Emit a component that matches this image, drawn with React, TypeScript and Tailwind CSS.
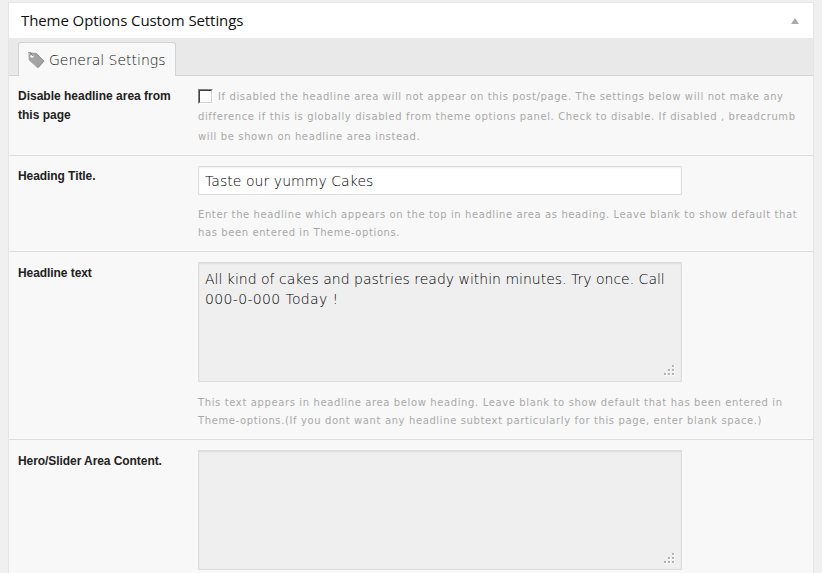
import type { ReactNode } from "react";

const SANS = "font-['DejaVu_Sans',sans-serif]";

function Grip() {
  const dots = [[9, 1], [5, 5], [9, 5], [1, 9], [5, 9], [9, 9]];
  return (
    <svg className="absolute right-[5px] bottom-[4px]" width="13" height="13" shapeRendering="crispEdges">
      {dots.map(([x, y]) => (
        <g key={`${x}-${y}`}>
          <rect x={x} y={y} width="3" height="3" fill="#fafafa" />
          <rect x={x} y={y} width="2" height="2" fill="#b2b2b2" />
        </g>
      ))}
    </svg>
  );
}

function TagIcon() {
  return (
    <svg className="shrink-0" width="17" height="17" viewBox="0 0 17 17">
      <path d="M1 2.5 2.5 1 8 1.3 15.8 9.2 9.8 15.8 1.2 8Z" fill="#a3a3a3" stroke="#a3a3a3" strokeLinejoin="round" />
      <path d="M8 1.3 15.8 9.2 10 15.6" fill="none" stroke="#8a8a8a" />
      <circle cx="4" cy="4.2" r="1.6" fill="#f7f7f7" />
      <path d="M0 .8H3L4.6 4" fill="none" stroke="#7c7c7c" />
    </svg>
  );
}

function Label({ children, className = "pt-px" }: { children: ReactNode; className?: string }) {
  return (
    <div className={`w-[180px] shrink-0 whitespace-nowrap font-['Liberation_Sans',sans-serif] text-[12px] leading-[19px] font-bold text-[#222] ${className}`}>
      {children}
    </div>
  );
}

function Help({ lines, className }: { lines: string[]; className: string }) {
  return (
    <div className={`${SANS} whitespace-nowrap text-[10px] text-[#a9a9a9] ${className}`}>
      {lines.map((line) => (
        <div key={line}>{line}</div>
      ))}
    </div>
  );
}

function TextArea({ children }: { children?: ReactNode }) {
  return (
    <div className={`${SANS} relative h-[120px] w-[484px] border border-[#dddddd] bg-[#efefef] px-[6px] pt-[6px] text-[14px] leading-5 font-extralight whitespace-nowrap text-black shadow-[inset_0_1px_2px_rgba(0,0,0,0.07)]`}>
      {children}
      <Grip />
    </div>
  );
}

export default function App() {
  return (
    <div className="h-[573px] overflow-hidden bg-[#f0f0f0] pt-[2px] pl-[8px]">
      <div className="h-[600px] w-[806px] border border-[#e5e5e5] bg-[#f8f8f8] shadow-[0_1px_1px_rgba(0,0,0,0.04)]">
        <header className="flex h-[35px] items-center justify-between bg-white pr-[14px] pl-[12px]">
          <h1 className="pb-[2px] font-['Open_Sans',sans-serif] text-[15px] leading-5 font-normal tracking-[-0.09px] text-[#111]">Theme Options Custom Settings</h1>
          <svg width="8" height="6"><path d="M4 0 8 6H0Z" fill="#aaa" /></svg>
        </header>
        <nav className="flex h-[38px] items-end border-b border-[#d3d3d3] bg-[#e9e9e9] pl-[9px]">
          <div className={`${SANS} -mb-px flex h-[34px] w-[158px] items-center gap-[4px] rounded-t-[3px] border border-b-0 border-[#d3d3d3] bg-[#f8f8f8] pt-px pl-[9px] text-[14px] font-extralight whitespace-nowrap text-[#111]`}>
            <TagIcon />
            <span>General Settings</span>
          </div>
        </nav>
        <main>
          <section className="flex h-[80px] border-b border-[#dddddd] pt-[10px] pl-[9px]">
            <Label>Disable headline area from<br />this page</Label>
            <div className="relative pt-px">
              <Help className="leading-5 tracking-[0.62px] [&>div:first-child]:pl-[20px]" lines={[
                "If disabled the headline area will not appear on this post/page. The settings below will not make any",
                "difference if this is globally disabled from theme options panel. Check to disable. If disabled , breadcrumb",
                "will be shown on headline area instead.",
              ]} />
              <span className="absolute top-[3px] left-0 size-[15px] border border-t-[#808080] border-r-white border-b-white border-l-[#808080]">
                <span className="block size-full border border-t-[#404040] border-r-[#d4d0c8] border-b-[#d4d0c8] border-l-[#404040] bg-white" />
              </span>
            </div>
          </section>
          <section className="flex h-[96px] border-b border-[#dddddd] pt-[10px] pl-[9px]">
            <Label className="pt-px tracking-[-0.07px]">Heading Title.</Label>
            <div>
              <div className={`${SANS} flex h-[29px] w-[484px] items-center border border-[#dddddd] bg-white px-[6px] pt-[2px] text-[14px] font-extralight tracking-[0.05px] whitespace-nowrap text-black shadow-[inset_0_1px_2px_rgba(0,0,0,0.07)]`}>Taste our yummy Cakes</div>
              <Help className="mt-[11px] leading-[18px] tracking-[0.6px]" lines={[
                "Enter the headline which appears on the top in headline area as heading. Leave blank to show default that",
                "has been entered in Theme-options.",
              ]} />
            </div>
          </section>
          <section className="flex h-[188px] border-b border-[#dddddd] pt-[10px] pl-[9px]">
            <Label className="pt-[2px] tracking-[-0.07px]">Headline text</Label>
            <div>
              <TextArea>
                <div>All kind of cakes and pastries ready within minutes. Try once. Call</div>
                <div className="tracking-[0.35px]">000-0-000 Today !</div>
              </TextArea>
              <Help className="mt-[12px] leading-[18px] tracking-[0.62px]" lines={[
                "This text appears in headline area below heading. Leave blank to show default that has been entered in",
                "Theme-options.(If you dont want any headline subtext particularly for this page, enter blank space.)",
              ]} />
            </div>
          </section>
          <section className="flex pt-[10px] pl-[9px]">
            <Label className="pt-[2px] tracking-[-0.07px]">Hero/Slider Area Content.</Label>
            <TextArea />
          </section>
        </main>
      </div>
    </div>
  );
}
